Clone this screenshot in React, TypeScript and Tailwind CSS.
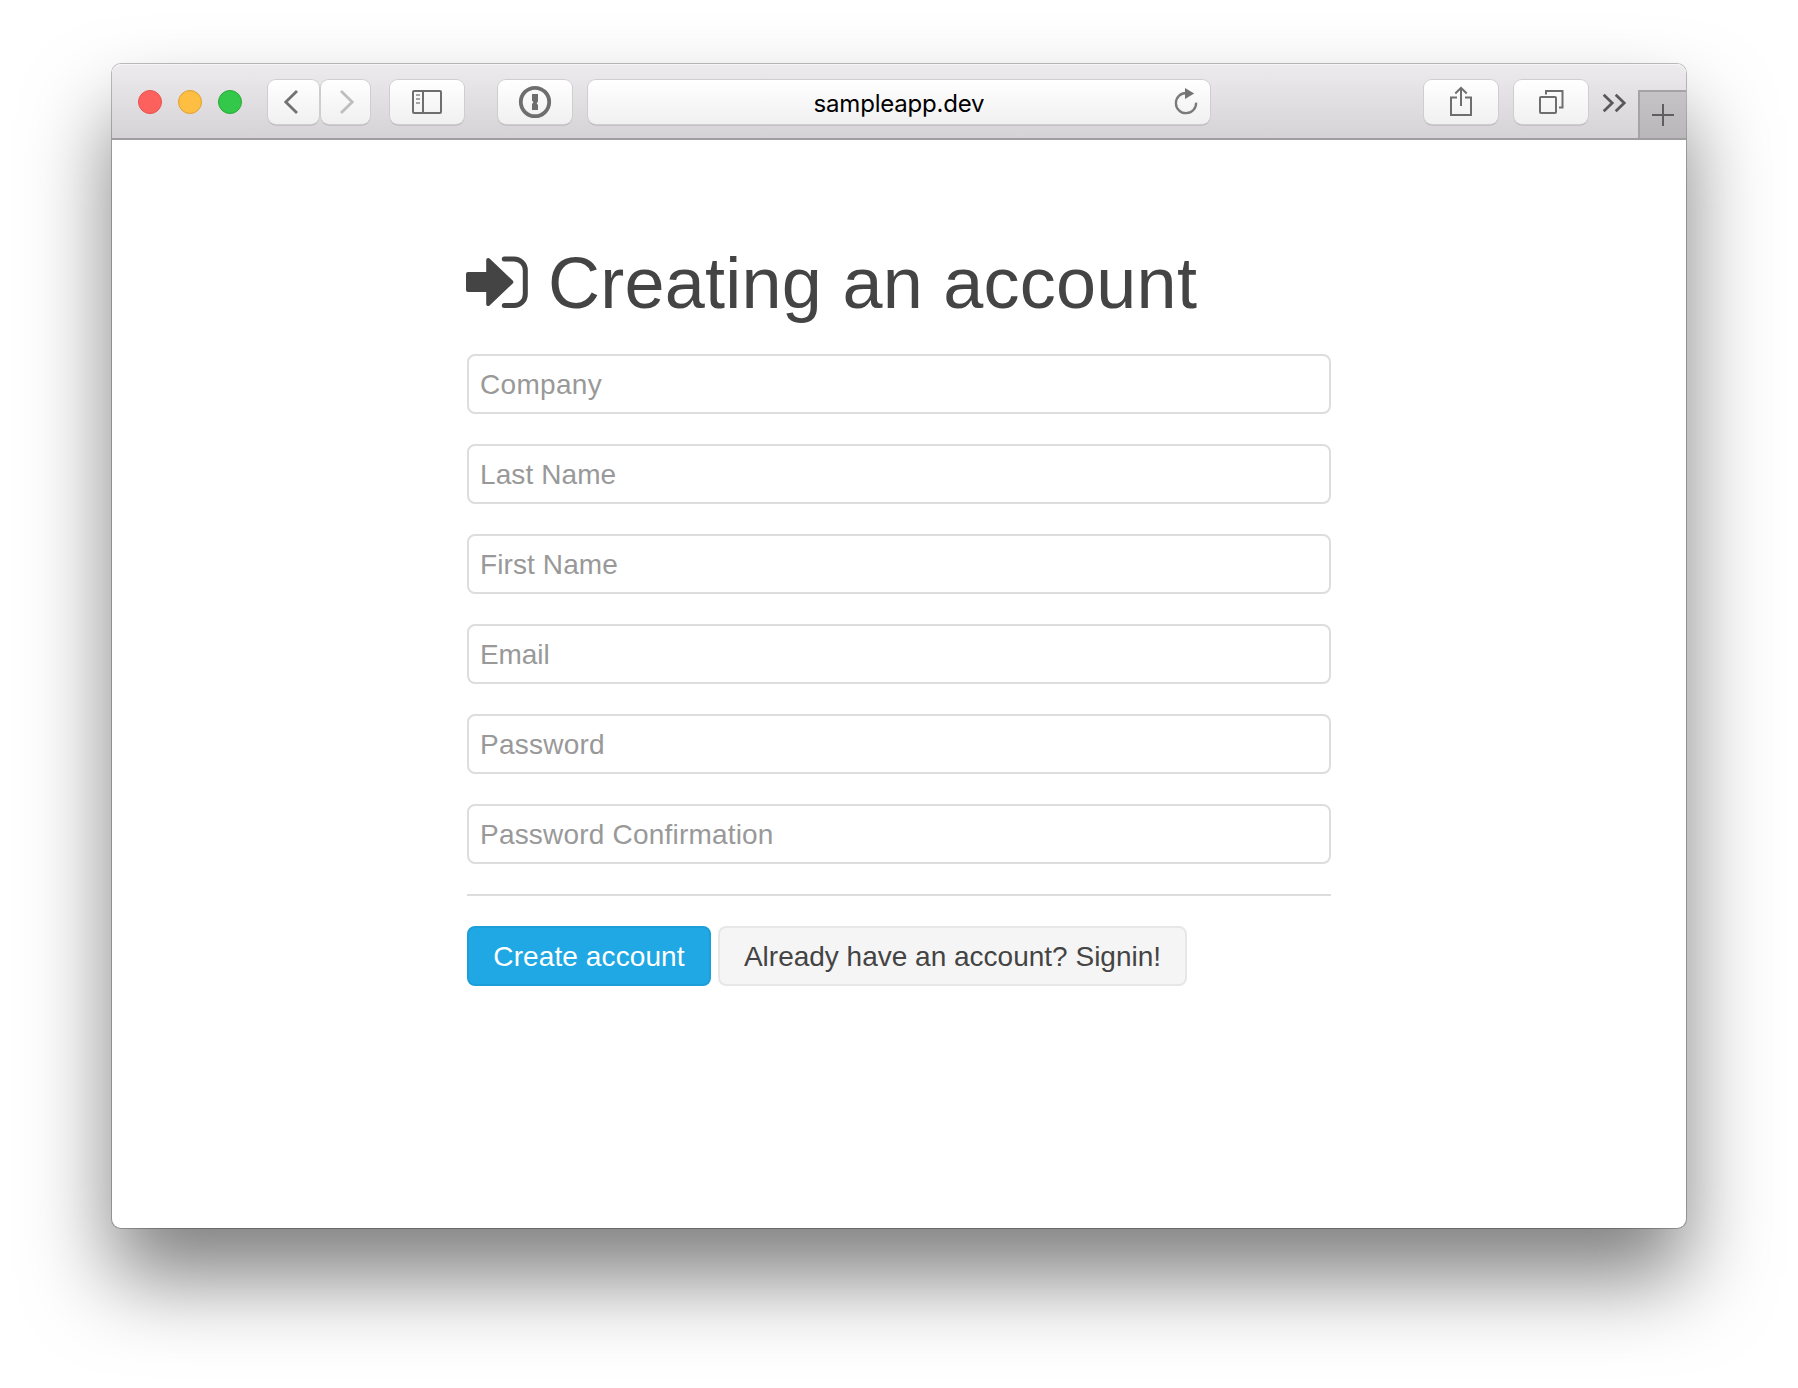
import type { ReactNode } from "react";

const fields = [
  { label: "Company", type: "text", spacing: "placeholder:tracking-[0.3px]" },
  { label: "Last Name", type: "text", spacing: "placeholder:tracking-[0.1px]" },
  { label: "First Name", type: "text", spacing: "placeholder:tracking-[0.1px]" },
  { label: "Email", type: "email", spacing: "placeholder:tracking-[-0.1px]" },
  { label: "Password", type: "password", spacing: "placeholder:tracking-[0.25px]" },
  { label: "Password Confirmation", type: "password", spacing: "placeholder:tracking-[0.2px]" },
];

const surface =
  "flex h-11 items-center justify-center rounded-[8px] bg-linear-to-b from-white to-[#f1f0f1] shadow-[0_0_0_1px_#cfcdd0,0_1.5px_0_0_#aeacaf]";

function ToolButton({ label, className, children }: { label: string; className: string; children: ReactNode }) {
  return (
    <button aria-label={label} className={`${surface} shrink-0 ${className}`}>
      {children}
    </button>
  );
}

function Toolbar() {
  return (
    <header className="flex h-[76px] items-start rounded-t-[9px] border-b-2 border-[#a09da1] bg-linear-to-b from-[#edebee] to-[#d5d3d6] pt-4 shadow-[inset_0_1px_0_#f6f5f6]">
      <div className="ml-[26px] mt-[10px] flex gap-4">
        <span className="size-6 rounded-full border border-[#e9504d] bg-[#fc615d]" />
        <span className="size-6 rounded-full border border-[#dfa032] bg-[#fdbe41]" />
        <span className="size-6 rounded-full border border-[#27aa35] bg-[#34c84a]" />
      </div>
      <div className="ml-[26px] flex gap-[2px]">
        <ToolButton label="Back" className="w-[51px]">
          <svg width="51" height="44" fill="none" stroke="#727272" strokeWidth="2.8">
            <path d="M29 11 17.8 22 29 33" />
          </svg>
        </ToolButton>
        <ToolButton label="Forward" className="w-[49px]">
          <svg width="49" height="44" fill="none" stroke="#bebebe" strokeWidth="2.8">
            <path d="M20 11 31.2 22 20 33" />
          </svg>
        </ToolButton>
      </div>
      <ToolButton label="Sidebar" className="ml-5 w-[74px]">
        <svg width="74" height="44" fill="none" stroke="#6e6e6e" strokeWidth="2">
          <rect x="23" y="11" width="28" height="22" rx="1" />
          <path d="M33 11v22" />
          <path d="M26 15h4M26 19h4M26 23h4" strokeWidth="1.5" stroke="#8a8a8a" />
        </svg>
      </ToolButton>
      <ToolButton label="Passwords" className="ml-[34px] w-[74px]">
        <svg width="74" height="44" fill="none">
          <circle cx="37" cy="22" r="14.2" stroke="#6e6e6e" strokeWidth="3.8" />
          <path d="M34 14h6v7.5l-1.4 1.8 1.4 1.8V30h-6v-6l1.4-1.8-1.4-1.8z" fill="#6e6e6e" />
        </svg>
      </ToolButton>
      <div className={`${surface} relative ml-4 w-[622px] shrink-0`}>
        <span className="pt-[3px] font-['Inter'] text-[24px] leading-none tracking-[-0.2px] text-black">sampleapp.dev</span>
        <svg className="absolute right-[10px] top-1" width="30" height="36" fill="none">
          <path d="M16.2 9A10.1 10.1 0 1 0 26.1 18.6" stroke="#7a7a7a" strokeWidth="2.3" />
          <path d="M15 4v11l9.2-5.5z" fill="#747474" />
        </svg>
      </div>
      <ToolButton label="Share" className="ml-[214px] w-[74px]">
        <svg width="74" height="44" fill="none" stroke="#6e6e6e" strokeWidth="2">
          <path d="M33 17.5h-6V35h20V17.5h-6M37 26V8.5M31.3 13.5 37 7.8l5.7 5.7" />
        </svg>
      </ToolButton>
      <ToolButton label="Tabs" className="ml-4 w-[74px]">
        <svg width="74" height="44" fill="none" stroke="#6e6e6e" strokeWidth="2">
          <rect x="26" y="17" width="16" height="16" rx="1" />
          <path d="M32 14.5V11h16.5v16.5H45" />
        </svg>
      </ToolButton>
      <svg className="ml-[14px] mt-[10px] shrink-0" width="26" height="26" fill="none" stroke="#5a585b" strokeWidth="2.8">
        <path d="M1.7 4.8 10.2 13l-8.5 8.2M13.7 4.8 22.2 13l-8.5 8.2" />
      </svg>
      <button aria-label="New tab" className="ml-auto mt-[10px] h-12 w-12 shrink-0 border-l-2 border-t-2 border-[#a5a3a6] bg-linear-to-b from-[#c5c3c6] to-[#b9b7ba]">
        <svg width="46" height="46" fill="none" stroke="#5f5d60" strokeWidth="2">
          <path d="M12 23h22M23 12v22" />
        </svg>
      </button>
    </header>
  );
}

function SignInIcon() {
  return (
    <svg className="shrink-0" width="64" height="56" fill="none">
      <path d="M2 20h20.2V6L45.3 28 22.2 50V36H2z" fill="#444" stroke="#444" strokeWidth="4" strokeLinejoin="round" />
      <path d="M38.3 4.9H48A11.3 11.3 0 0 1 59.3 16.2v24A11.3 11.3 0 0 1 48 51.5h-9.7" stroke="#444" strokeWidth="5" strokeLinecap="round" />
    </svg>
  );
}

export default function App() {
  return (
    <div className="h-[1388px] w-[1798px] overflow-hidden bg-white pl-[112px] pt-16 font-['Liberation_Sans',sans-serif]">
      <div className="h-[1164px] w-[1574px] rounded-[9px] bg-white shadow-[0_0_0_1px_rgba(0,0,0,0.25),0_50px_84px_rgba(0,0,0,0.5)]">
        <Toolbar />
        <main className="ml-[355px] w-[864px] pt-[106px]">
          <h1 className="-ml-[1px] flex h-[72px] items-center text-[72px] leading-[72px] tracking-[0.25px] text-[#444]">
            <SignInIcon />
            <span className="ml-[18px] whitespace-nowrap pt-[2px]">Creating an account</span>
          </h1>
          <form className="mt-9">
            <div className="flex flex-col gap-[30px]">
              {fields.map((f) => (
                <input
                  key={f.label}
                  type={f.type}
                  placeholder={f.label}
                  className={`h-[60px] w-full rounded-[8px] border-2 border-[#ddd] bg-white pl-[11px] pr-3 pt-[2px] text-[28px] text-[#444] placeholder:text-[#999] placeholder:opacity-100 ${f.spacing}`}
                />
              ))}
            </div>
            <hr className="my-[30px] border-t-2 border-[#ddd]" />
            <div className="flex gap-[7px] text-[28px]">
              <button type="button" className="h-[60px] w-[244px] rounded-[8px] border-2 border-[#1c9fd9] bg-[#1fa8e3] pt-[2px] tracking-[0.1px] text-white">
                Create account
              </button>
              <button type="button" className="h-[60px] w-[469px] whitespace-nowrap rounded-[8px] border-2 border-[#e7e7e7] bg-[#f5f5f5] pt-[2px] text-[#444]">
                Already have an account? Signin!
              </button>
            </div>
          </form>
        </main>
      </div>
    </div>
  );
}
